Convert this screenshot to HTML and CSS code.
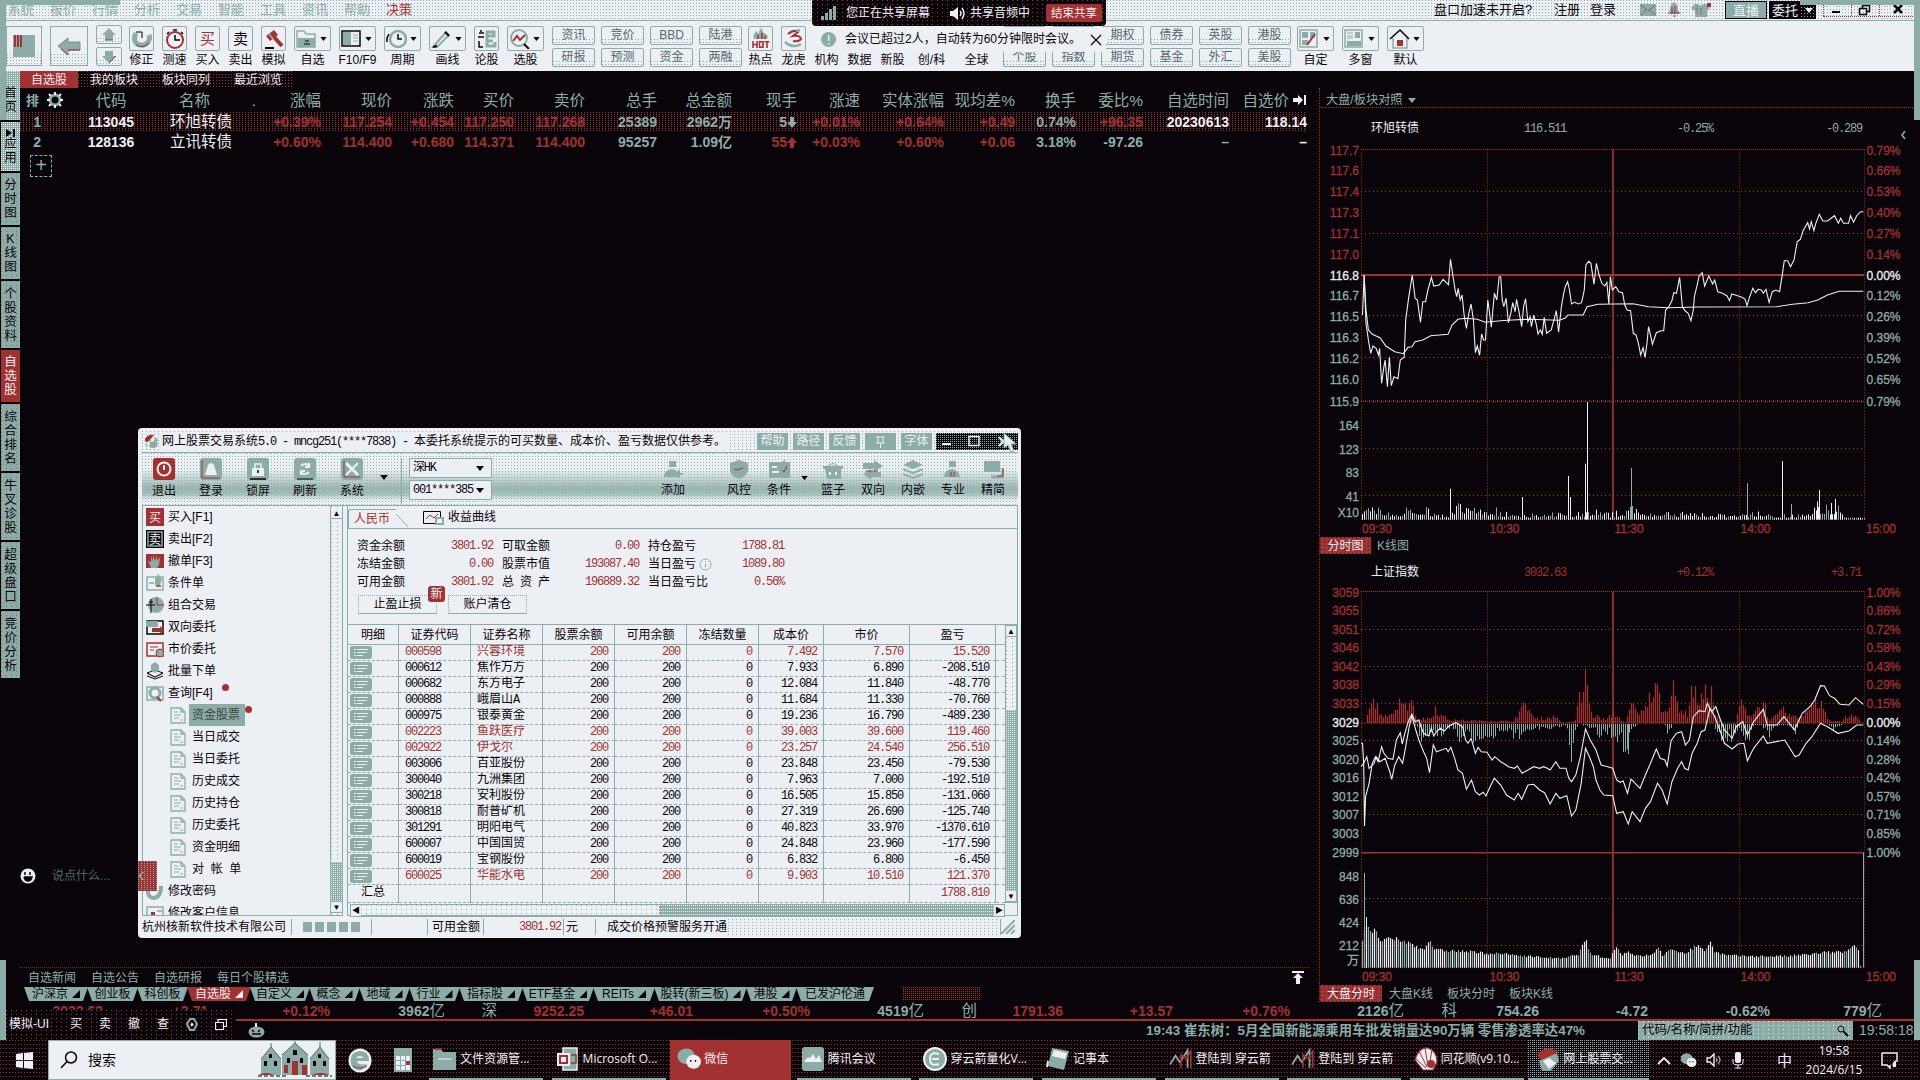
FILE: index.html
```html
<!DOCTYPE html>
<html lang="zh-CN">
<head>
<meta charset="utf-8">
<title>同花顺</title>
<link rel="stylesheet" href="styles.css">
</head>
<body>
<svg class="defs" aria-hidden="true">
  <symbol id="i-down" viewBox="0 0 8 5"><path d="M0 0h8L4 5z" fill="currentColor"/></symbol>
  <symbol id="i-doc" viewBox="0 0 16 17"><path d="M1 1h10l4 4v11H1zM11 1v4h4" fill="#ecf0f4" stroke="#8cada7" stroke-width="1.3"/><path d="M4 5h4M4 8h7M4 11h5M10 13h3" stroke="#8cada7"/></symbol>
  <symbol id="i-chart" viewBox="0 0 22 20"><path d="M1 15l5-8 4 6 7-11v16" fill="none" stroke="#8cada7" stroke-width="1.6"/><path d="M11 18V6l5 4 4-8v16" fill="none" stroke="#a23131" stroke-width="1.5"/></symbol>
  <symbol id="i-chat" viewBox="0 0 26 24"><ellipse cx="10" cy="9" rx="9.5" ry="8.5" fill="#8cada7"/><ellipse cx="18" cy="15" rx="8" ry="7.5" fill="#ecf0f4"/><path d="M15 13v2M20 13v2" stroke="#090409" stroke-width="1.5"/></symbol>
</svg>

<div class="app">
  <header class="menubar">
    <nav class="menus"><span>系统</span><span>报价</span><span>行情</span><span>分析</span><span>交易</span><span>智能</span><span>工具</span><span>资讯</span><span>帮助</span><span class="red">决策</span></nav>
    <div class="account">
      <span>盘口加速未开启?</span><span>注册</span><span>登录</span>
      <svg width="17" height="14"><path d="M0 1h16v12H0z" fill="#8cada7"/><path d="M1 2l7 6 7-6M1 12l5-5M15 12l-5-5" fill="none" stroke="#a23131" stroke-dasharray="2 1"/></svg>
      <svg width="14" height="16"><path d="M7 0q4 2 4 8l3 4H0l3-4q0-6 4-8z" fill="#8cada7"/><path d="M5 5v6M8 4v7M3 11h9M6 14h3" stroke="#a23131"/></svg>
      <svg width="21" height="16"><path d="M4 2h3q3 3 5 0h3l4 4-3 3v6H4V9L0 6z" fill="#8cada7"/><path d="M16 1h4v4h-4z" fill="#a23131"/><path d="M6 4v8M10 6v7" stroke="#a23131" stroke-dasharray="1 1"/></svg>
    </div>
    <div class="wbuttons"><b class="live">直播</b><b class="entrust">委托</b><i class="drop"><svg width="8" height="5"><use href="#i-down"/></svg></i></div>
    <div class="wctl">
      <svg width="28" height="12"><path d="M8 7h8v2H8z"/></svg>
      <svg width="28" height="12"><path d="M7.500 4.500h7v6h-7zM10.500 4V1.500h7v6H15" fill="none" stroke="#090409" stroke-width="1.500"/></svg>
      <svg width="34" height="12"><path d="M14 1l8 8M22 1l-8 8" stroke="#090409" stroke-width="2.500"/></svg>
    </div>
  </header>

  <div class="toolbar" id="toolbar"></div>

  <div class="work">
    <aside class="side">
      <span class="s1 home">首页</span><span class="s1 apps"><svg width="10" height="8"><path d="M0 0l6 4-6 4zM7 0h2v8H7z"/></svg>应用</span><span class="s2">分时图</span><span class="s2">K线图</span><span class="s3">个股资料</span><span class="s2 on">自选股</span><span class="s3">综合排名</span><span class="s3">牛叉诊股</span><span class="s3">超级盘口</span><span class="s3">竞价分析</span>
    </aside>

    <main class="market">
      <div class="tabs"><span class="on">自选股</span><span>我的板块</span><span>板块同列</span><span>最近浏览</span></div>
      <div id="quotes"></div>
      <div class="addrow"><span>+</span></div>
      <div class="grow">
        <div class="danmu"><svg width="16" height="16"><circle cx="8" cy="8" r="7.500" fill="#ecf0f4"/><path d="M5 4v3M10 4v3M4 9h8q-1 4-4 4t-4-4" stroke="#090409" stroke-width="1.500"/></svg><span>说点什么...</span></div>
      </div>
      <div class="news"><span>自选新闻</span><span>自选公告</span><span>自选研报</span><span>每日个股精选</span><svg width="12" height="13"><path d="M0 0h12v2H0zM6 2l5 5H8v6H4V7H1z" fill="#ecf0f4"/></svg></div>
      <div class="sectors" id="sectors"></div>
    </main>

    <section class="panel">
      <h2>大盘/板块对照 <svg width="8" height="5"><use href="#i-down"/></svg></h2>
      <svg class="chart" id="chart1" width="594" height="427" viewBox="10 0 594 427"></svg>
      <div class="ctabs"><span class="on">分时图</span><span>K线图</span></div>
      <svg class="chart" id="chart2" width="594" height="431" viewBox="10 4 594 431"></svg>
      <div class="ctabs wide"><span class="on">大盘分时</span><span>大盘K线</span><span>板块分时</span><span>板块K线</span></div>
    </section>
  </div>

  <div class="indices" id="indices"></div>
  <div class="ticker">
    <svg class="pumpkin" width="17" height="15"><ellipse cx="8.500" cy="9" rx="8" ry="5.500" fill="#8cada7"/><path d="M8 0v4" stroke="#ecf0f4" stroke-width="2"/><path d="M4 7l2 2M12 7l-2 2M4 11h9" stroke="#090409" stroke-width="1.500"/></svg>
    <p>19:43 崔东树：5月全国新能源乘用车批发销量达90万辆 零售渗透率达47%</p>
    <label>代码/名称/简拼/功能<svg width="12" height="12"><circle cx="4" cy="4" r="3" fill="none" stroke="#090409"/><path d="M6 6l5 5" stroke="#090409" stroke-width="2"/></svg></label>
    <time>19:58:18</time>
  </div>

  <footer class="taskbar">
    <div class="start"><svg width="17" height="17"><path d="M0 2l7-1v7H0zM8 1l9-1v8H8zM0 9h7v7l-7-1zM8 9h9v8l-9-1z" fill="#ecf0f4"/></svg></div>
    <div class="search">
      <svg width="18" height="18"><circle cx="11" cy="6.500" r="5.500" fill="none" stroke="#090409" stroke-width="1.500"/><path d="M7 10.500L1 17" stroke="#090409" stroke-width="1.500"/></svg>
      <span>搜索</span>
      <svg class="castle" width="74" height="38" viewBox="0 0 74 38"><path d="M3 34V18L13 6l10 12v16zM24 34V14L37 2l13 12v20zM52 34V18L62 6l9 12v16z" fill="#8cada7"/><path d="M3 18L13 6l10 12M24 14L37 2l13 12M52 18L62 6l9 12M13 6V2M37 2V-3M62 6V1" fill="none" stroke="#55696a"/><path d="M6 20h3v5H6zM16 20h3v5h-3zM11 13h3v4h-3zM29 17h3v5h-3zM42 17h3v5h-3zM35 9h4v5h-4zM55 20h3v5h-3zM65 20h3v5h-3zM60 13h3v4h-3z" fill="#090409"/><path d="M34 20h6v14h-6zM44 24h5v10h-5zM26 24h4v8h-4z" fill="#a23131"/><path d="M0 34q8-4 16 0zM54 34q8-4 18 0z" fill="#a23131"/><path d="M30 38q7-8 14 0z" fill="#ecf0f4"/><path d="M0 35h28M48 35h26" stroke="#090409" stroke-dasharray="4 2"/></svg>
    </div>
    <div class="pin"><svg width="24" height="25"><ellipse cx="12" cy="12.500" rx="11.500" ry="12" fill="#ecf0f4"/><path d="M3 16Q1 4 12 3q9 0 9 10H9q1 5 10 3-3 7-9 6-6-1-7-6z" fill="#8cada7"/><path d="M8 10q4-4 8 0z" fill="#ecf0f4"/><path d="M5 18q7 4 14 0" stroke="#a23131" fill="none"/></svg></div>
    <div class="pin calc"><svg width="18" height="24"><path d="M0 0h18v24H0z" fill="#8cada7"/><path d="M2 8h4v4H2zM7 8h4v4H7zM2 13h4v4H2zM7 13h4v4H7zM2 18h4v4H2zM7 18h4v4H7zM12 8h4v14h-4z" fill="#ecf0f4"/><path d="M12 13h4v4h-4z" fill="#a23131"/></svg></div>
    <div class="tasks" id="tasks"></div>
    <div class="tray">
      <svg width="14" height="9"><path d="M1 8l6-6 6 6" fill="none" stroke="#ecf0f4" stroke-width="1.800"/></svg>
      <svg width="17" height="15" viewBox="0 0 26 24"><use href="#i-chat"/></svg>
      <svg width="17" height="14"><path d="M1 5h3l4-4v12L4 9H1z" fill="none" stroke="#ecf0f4" stroke-width="1.400"/><path d="M10 5q2 2 0 4M12 3q4 4 0 8" fill="none" stroke="#8cada7" stroke-width="1.300"/></svg>
      <svg width="12" height="17"><rect x="3" y="0" width="6" height="11" rx="2" fill="#ecf0f4"/><path d="M1 7v4q0 2 5 2t5-2V7M6 13v3M3 16h6" fill="none" stroke="#ecf0f4"/></svg>
      <span class="ime">中</span>
      <div class="clock"><span>19:58</span><span>2024/6/15</span></div>
      <svg width="18" height="17"><path d="M1 1h15v9M1 1v12h5l3 3v-3" fill="none" stroke="#ecf0f4" stroke-width="1.500"/><path d="M15 8q-5 3-3 7h3z" fill="#ecf0f4"/></svg>
    </div>
  </footer>
</div>

<i class="frame f1"></i><i class="frame f2"></i><i class="frame f3"></i><i class="frame f4"></i><i class="frame f5"></i><i class="frame f6"></i>

<div class="share">
  <svg width="15" height="16"><path d="M0 11h3v4H0zM4 8h3v7H4zM8 4h3v11H8zM12 1h3v14h-3z" fill="#8cada7"/></svg>
  <span>您正在共享屏幕</span>
  <svg class="spk" width="15" height="13"><path d="M0 4h3l5-4v13L3 9H0z" fill="#ecf0f4"/><path d="M10 4q2 2 0 5M12 1q4 5 0 11" fill="none" stroke="#ecf0f4" stroke-width="1.500"/></svg>
  <span>共享音频中</span><b>结束共享</b>
</div>
<div class="notice">
  <svg width="15" height="15"><circle cx="7.500" cy="7.500" r="7.500" fill="#8cada7"/><path d="M7 3h1.500v6H7zM7 11h1.500v1.500H7z" fill="#ecf0f4"/></svg>
  <span>会议已超过2人，自动转为60分钟限时会议。</span>
  <svg width="12" height="12"><path d="M1 1l10 10M11 1L1 11" stroke="#090409" stroke-width="1.300"/></svg>
</div>

<div class="quickbar"><span>模拟-UI</span><span>买</span><span>卖</span><span>撤</span><span>查</span><svg width="12" height="13"><path d="M4 1h4l3 5-3 6H4L1 6z" fill="none" stroke="#8cada7" stroke-width="2"/><circle cx="6" cy="6.500" r="1.500" fill="#ecf0f4"/></svg><svg width="12" height="12"><path d="M.5 3.500h8v7h-8zM3 3V.5h8.500v7H9" fill="none" stroke="#ecf0f4" stroke-width="1.200"/></svg></div>

<div class="trade">
  <div class="t-title">
    <svg width="15" height="15"><path d="M1 5q3-5 9-4L5 7q-2 2-4 0z" fill="#a23131"/><path d="M6 8h7v4q-3 3-7 1zM11 4l3 2-3 2zM1 10l3 2" fill="#8cada7" stroke="#8cada7"/></svg>
    <p>网上股票交易系统<i>5.0 - mncg251(****7838) - </i>本委托系统提示的可买数量、成本价、盈亏数据仅供参考。</p>
    <div class="t-btns"><b>帮助</b><b>路径</b><b>反馈</b><b><svg width="9" height="12"><path d="M0 1h9M2 1v6M7 1v6M0 7h9M4.500 7v5" stroke="#ecf0f4" fill="none"/></svg></b><b>字体</b></div>
    <div class="t-win"><svg width="82" height="17"><path d="M6 10h9v2H6z" fill="#ecf0f4"/><path d="M33 3.500h10v9H33z" fill="none" stroke="#ecf0f4" stroke-width="1.500"/><path d="M63 4l8 9M71 4l-8 9" stroke="#ecf0f4" stroke-width="2"/></svg></div>
  </div>
  <div class="t-bar">
    <div class="t-left" id="tleft"></div>
    <svg class="t-arrow" width="10" height="5" viewBox="0 0 8 5"><use href="#i-down"/></svg>
    <div class="t-sel"><span>深HK<svg width="8" height="5"><use href="#i-down"/></svg></span><span>001****385<svg width="8" height="5"><use href="#i-down"/></svg></span></div>
    <div class="t-right" id="tright"></div>
  </div>
  <div class="t-body">
    <div class="tree"><div class="t-list" id="tree"></div><div class="vbar"><i>▲</i><em></em><b></b><i>▼</i></div></div>
    <div class="t-main">
      <div class="t-tabs"><span class="cny">人民币</span><svg class="slope" width="12" height="20"><path d="M0 7l12 13" stroke="#8cada7" fill="none"/></svg><svg width="21" height="16"><path d="M12 14.500H.5V2.500h17V8" fill="none" stroke="#090409"/><path d="M3 10l4-4 4 3 4-4" fill="none" stroke="#a23131"/><path d="M13 9h7v6h-7z" fill="none" stroke="#8cada7" stroke-width="2"/></svg><span>收益曲线</span></div>
      <div class="sum">
        <span>资金余额</span><b>3801.92</b><span>可取金额</span><b>0.00</b><span>持仓盈亏</span><b>1788.81</b>
        <span>冻结金额</span><b>0.00</b><span>股票市值</span><b>193087.40</b><span>当日盈亏<svg width="13" height="13"><circle cx="6.500" cy="6.500" r="5.500" fill="none" stroke="#8cada7"/><path d="M6.500 5.500v4M6.500 3v1" stroke="#8cada7"/></svg></span><b>1089.80</b>
        <span>可用金额</span><b>3801.92</b><span class="spread">总资产</span><b>196889.32</b><span>当日盈亏比</span><b>0.56%</b>
      </div>
      <div class="acts"><button>止盈止损<em>新</em></button><button>账户清仓</button></div>
      <div class="t-grid"><div class="holdings" id="holdings"></div><div class="vbar v2"><i>▲</i><em></em><b></b><i>▼</i></div></div>
      <div class="hbar"><i>◀</i><em></em><b></b><i>▶</i></div>
    </div>
  </div>
  <div class="t-status"><span>杭州核新软件技术有限公司</span><span class="blocks"><i></i><i></i><i></i><i></i><i></i></span><span></span><span>可用金额</span><span class="amt">3801.92</span><span>元</span><span class="svc">成交价格预警服务开通</span><svg width="14" height="14"><path d="M0 14L14 0M5 14l9-9M10 14l4-4" stroke="#8cada7" stroke-width="2"/></svg></div>
  <div class="handle">‹</div>
</div>
<svg class="cursor" width="14" height="22"><path d="M1 0v15l4-3 3 7 3-1-3-7h5z" fill="#ecf0f4" stroke="#8cada7"/></svg>

<script src="script.js"></script>
</body>
</html>
```
FILE: styles.css
```css
:root {
  --ink: #090409;
  --paper: #ecf0f4;
  --teal: #8cada7;
  --red: #a23131;
  --cjk: "Liberation Sans", "Noto Sans CJK SC", sans-serif;
}
* { box-sizing: border-box; }
body { margin: 0; width: 1920px; height: 1080px; overflow: hidden; background: var(--ink); color: var(--paper); font: 12px/1.2 var(--cjk); white-space: nowrap; }
svg { display: block; flex: none; }
i, em { font-style: normal; }
.defs { position: absolute; width: 0; height: 0; }
.app { display: flex; flex-direction: column; width: 1920px; height: 1080px; }
.red { color: var(--red); }

/* menu bar */
.menubar { height: 21px; display: flex; background: conic-gradient(at 1px 1px, transparent 75%, var(--teal) 0) 0 0/3px 3px var(--paper); border-bottom: 1px solid var(--teal); color: var(--ink); font-size: 13px; line-height: 20px; }
.menus { display: flex; gap: 16px; padding-left: 8px; width: 1434px; color: var(--teal); }
.menus span { width: 26px; }
.menus .red { color: var(--red); }
.account { display: flex; align-items: center; width: 291px; }
.account span:nth-child(1) { width: 120px; }
.account span:nth-child(2) { width: 36px; }
.account span:nth-child(3) { width: 50px; }
.account svg { margin-right: 10px; }
.wbuttons { display: flex; width: 98px; height: 18px; margin-top: 1px; line-height: 17px; text-align: center; }
.wbuttons b { font-weight: 400; color: var(--paper); border: 1px solid var(--ink); }
.live { width: 42px; background: var(--teal); }
.entrust { width: 32px; margin-left: 2px; background: var(--ink); }
.drop { width: 15px; padding: 7px 4px; background: conic-gradient(at 1px 1px, transparent 75%, var(--teal) 0) 0 0/3px 3px var(--ink); color: var(--paper); }
.wctl { display: flex; align-items: flex-end; height: 17px; border-bottom: 1px dotted var(--red); }
.wctl svg { border-left: 1px dotted var(--red); margin-top: 5px; }

/* toolbar */
.toolbar { height: 50px; display: flex; gap: 8px; padding: 5px 0 0 6px; background: var(--paper); color: var(--ink); }
.tool { width: 25px; display: flex; flex-direction: column; align-items: center; line-height: 14px; }
.tool.w { width: 37px; }
.tool .ic { width: 100%; height: 25px; border: 1px solid var(--teal); border-radius: 2px; display: flex; align-items: center; justify-content: center; margin-bottom: 2px; }
.tool.w .ic { justify-content: space-between; padding: 0 3px 0 1px; }
.tool.plain .ic { border-color: transparent; }
.big { width: 38px; height: 40px; border: 1px solid var(--teal); display: flex; align-items: center; justify-content: center; background: linear-gradient(var(--paper) 70%, transparent 70%), conic-gradient(at 1px 1px, transparent 75%, var(--teal) 0) 0 0/3px 3px; }
.stack { display: flex; flex-direction: column; gap: 3px; margin-top: -1px; }
.stack span { width: 43px; height: 19px; border: 1px solid var(--teal); border-radius: 2px; display: flex; align-items: center; justify-content: center; color: #55696a; background: linear-gradient(var(--paper) 60%, transparent 60%), conic-gradient(at 1px 1px, transparent 75%, var(--teal) 0) 0 0/3px 3px; }
.stack.s { margin: 0 -2px 0 0; }
.stack.nar { margin-right: -1px; }
.stack.nar span { width: 26px; background-color: var(--paper); }

/* side tabs */
.work { display: flex; height: 931px; }
.side { width: 20px; display: flex; flex-direction: column; gap: 2px; padding-left: 1px; color: var(--ink); font-size: 12.5px; line-height: 14px; }
.side span { display: flex; flex-direction: column; align-items: center; justify-content: center; white-space: normal; padding: 0 3px; text-align: center; word-break: break-all; background: conic-gradient(at 1px 1px, transparent 75%, rgba(162,49,49,.6) 0) 0 0/5px 4px var(--teal); }
.side .s1 { height: 49px; background: conic-gradient(at 1px 1px, transparent 75%, var(--paper) 0) 0 0/2px 2px var(--teal); }
.side .home { padding-top: 8px; }
.side .s2 { height: 52px; }
.side .s3 { height: 67px; }
.side .on { background: var(--red); color: var(--paper); }

/* watch list */
.market { width: 1299px; display: flex; flex-direction: column; }
.tabs { display: flex; height: 17px; line-height: 18px; text-align: center; }
.tabs span { width: 72px; background: conic-gradient(at 1px 1px, transparent 75%, var(--red) 0) 0 0/3px 3px; }
.tabs .on { width: 58px; background: var(--red); }
.qrow { display: grid; grid-template-columns: 58px 66px 66px 46px 65px 71px 62px 60px 71px 72px 75px 65px 63px 84px 71px 61px 67px 86px 78px; height: 20px; align-items: center; text-align: right; font: bold 14px/20px var(--cjk); color: var(--teal); }
.qrow.head { height: 24px; font-weight: 400; font-size: 15.500px; line-height: 23px; }
.qrow.head span:last-child { display: flex; justify-content: flex-end; align-items: center; gap: 4px; padding-right: 1px; }
.qrow.sel { width: 1286px; background: conic-gradient(at 1px 1px, transparent 75%, var(--red) 0) 0 0/3px 2px; }
.qrow span:nth-child(1) { padding-right: 37px; }
.qrow.head span:nth-child(1) { display: flex; gap: 8px; padding: 0 0 0 6px; font-size: 13px; align-items: center; font-weight: 700; }
.qrow span:nth-child(2) { text-align: center; }
.qrow .name { font-weight: 400; font-size: 15.500px; color: var(--paper); white-space: nowrap; padding-right: 0; width: 88px; text-align: right; }
.qrow.head span:nth-child(3) { padding-right: 0; }
.qrow .up { color: var(--red); }
.qrow .wh { color: var(--paper); }
.addrow { padding: 3px 0 0 10px; }
.addrow span { display: block; width: 22px; height: 22px; border: 1px dashed var(--teal); color: var(--teal); text-align: center; font: 20px/19px var(--cjk); }
.grow { flex: 1; display: flex; flex-direction: column; justify-content: flex-end; }
.danmu { display: flex; align-items: center; gap: 16px; height: 16px; margin-bottom: 83px; color: #55696a; }
.news { display: flex; gap: 15px; height: 20px; line-height: 20px; padding-left: 8px; color: var(--teal); border-top: 1px dotted rgba(162,49,49,.7); margin-right: 10px; }
.news svg { margin: 3px 5px 0 auto; }
.sectors { display: flex; height: 15px; padding-left: 4px; color: var(--ink); }
.sectors span { height: 14px; background: var(--teal); clip-path: polygon(0 0, 100% 0, calc(100% - 5px) 100%, 5px 100%); display: flex; align-items: center; justify-content: center; gap: 4px; font-size: 12px; line-height: 14px; margin-right: -1px; }
.sectors span.on { background: var(--red); color: var(--paper); }
.sectors i { width: 8px; height: 8px; background: currentColor; clip-path: polygon(100% 0, 100% 100%, 0 100%); }
.sectors .hatch { margin-left: 30px; width: 78px; height: 14px; background: conic-gradient(at 1px 1px, transparent 75%, var(--red) 0) 0 0/2px 2px; }

/* right charts */
.panel { width: 601px; border-left: 1px dotted var(--red); margin-top: 17px; display: flex; flex-direction: column; }
.panel h2 { margin: 0; height: 22px; display: flex; align-items: center; gap: 5px; padding: 2px 0 0 6px; font: 12.200px/19px var(--cjk); color: var(--teal); background: linear-gradient(90deg, var(--red) 1px, transparent 1px) 102px 19px/2px 1px repeat-x; }
.chart text { font: 12px "Liberation Sans", "Noto Sans CJK SC", sans-serif; }
.chart .t { font-size: 12px; fill: var(--paper); }
.chart .v { font-family: "Liberation Mono", monospace; letter-spacing: -1.2px; }
.ctabs { height: 17px; display: flex; gap: 6px; line-height: 18px; color: var(--teal); }
.ctabs .on { width: 51px; text-align: center; background: conic-gradient(at 1px 1px, transparent 75%, var(--ink) 0) 0 0/4px 4px var(--red); color: var(--paper); }
.ctabs.wide { gap: 14px; }
.ctabs.wide .on { width: 62px; margin-right: -7px; }

/* index strip and ticker */
.indices { height: 19px; display: grid; grid-template-columns: 103px 105px 122px 115px 52px 87px 109px 117px 114px 53px 86px 110px 117px 114px 53px 82px 109px 122px 112px; font: bold 14px/18px var(--cjk); color: var(--teal); text-align: right; border-bottom: 2px solid var(--red); }
.indices .up { color: var(--red); }
.indices .cn { font-weight: 400; font-size: 15.500px; }
.indices small { font: 15.500px/1 var(--cjk); }
.ticker { height: 19px; display: flex; align-items: center; }
.pumpkin { margin-left: 248px; }
.ticker p { margin: 0 0 0 881px; width: 492px; font: bold 13.400px/18px "Liberation Sans", "Noto Sans CJK SC", sans-serif; color: var(--teal); }
.ticker label { width: 215px; height: 19px; background: conic-gradient(at 1px 1px, transparent 75%, var(--paper) 0) 0 0/5px 4px var(--teal); color: var(--ink); line-height: 19px; padding: 0 4px; display: flex; justify-content: space-between; align-items: center; font-size: 12.500px; }
.ticker time { margin-left: 6px; font-size: 14px; color: var(--teal); }

/* taskbar */
.taskbar { height: 40px; display: flex; align-items: center; background: conic-gradient(at 1px 1px, transparent 75%, var(--red) 0) 0 0/3px 4px var(--ink); font-family: "Open Sans", "Noto Sans CJK SC", sans-serif; }
.start { width: 48px; padding-left: 16px; }
.search { width: 288px; height: 40px; background: var(--paper); border: 1px solid var(--teal); display: flex; align-items: center; gap: 10px; padding: 0 3px 0 11px; color: var(--ink); font-size: 14px; }
.castle { margin-left: auto; }
.pin { width: 46px; padding-left: 12px; }
.calc { width: 43px; }
.tasks { display: flex; gap: 1.600px; width: 1232px; }
.task { width: 121px; height: 40px; flex: none; display: flex; align-items: center; gap: 3px; padding: 0 4px 2px 8px; background: linear-gradient(var(--teal), var(--teal)) 4px 100%/114px 2px no-repeat; }
.task svg { width: 24px; height: 24px; }
.task.hot { background: var(--red); padding-left: 7px; }
.task.on { background: linear-gradient(var(--teal), var(--teal)) 0 100%/121px 2px no-repeat, conic-gradient(at 1px 1px, transparent 75%, var(--teal) 0) 0 0/2px 2px; }
.tray { display: flex; align-items: center; gap: 9px; }
.ime { font-size: 15px; margin: 0 2px 0 24px; }
.clock { display: flex; flex-direction: column; align-items: center; width: 68px; gap: 4px; line-height: 15px; margin: 0 4px 0 -3px; }

/* teal edge of the shared screen */
.frame { position: absolute; background: var(--teal); }
.f1 { left: 0; top: 0; width: 120px; height: 5px; }
.f2 { left: 0; top: 0; width: 6px; height: 120px; }
.f3 { right: 0; top: 0; width: 120px; height: 5px; }
.f4 { right: 0; top: 0; width: 6px; height: 120px; }
.f5 { left: 0; top: 960px; width: 6px; height: 80px; }
.f6 { right: 0; top: 960px; width: 6px; height: 80px; }

/* meeting overlay */
.share { position: absolute; left: 812px; top: 0; width: 294px; height: 26px; display: flex; align-items: center; padding-left: 9px; border-radius: 0 0 4px 4px; background: conic-gradient(at 1px 1px, transparent 75%, var(--red) 0) 0 0/5px 4px var(--ink); }
.share span { margin-left: 10px; width: 85px; }
.share .spk { margin-left: 19px; }
.share .spk + span { margin-left: 5px; width: 62px; }
.share b { margin-left: 14px; width: 56px; height: 18px; line-height: 18px; background: var(--red); text-align: center; font-weight: 400; font-size: 11.500px; border-radius: 2px; }
.notice { position: absolute; left: 813px; top: 27px; width: 293px; height: 25px; background: var(--paper); color: var(--ink); display: flex; align-items: center; padding: 0 9px 0 8px; gap: 9px; font-size: 12px; }
.notice span { width: 238px; }
.quickbar { position: absolute; left: 6px; top: 1010px; width: 230px; height: 29px; display: flex; align-items: center; gap: 17px; padding-left: 3px; background: conic-gradient(at 1px 1px, transparent 75%, var(--red) 0) 0 0/5px 4px var(--ink); }
.quickbar span:first-child { width: 44px; }

/* trading window */
.trade { position: absolute; left: 138px; top: 428px; width: 883px; height: 510px; background: var(--paper); color: var(--ink); border-radius: 4px; padding: 3px 3px 0 4px; display: flex; flex-direction: column; }
.t-title { height: 22px; display: flex; align-items: center; border-bottom: 1px solid var(--teal); background: conic-gradient(at 1px 1px, transparent 75%, var(--teal) 0) 0 0/4px 3px; padding-left: 2px; }
.t-title p { margin: 0 0 0 3px; width: 595px; background: linear-gradient(90deg, var(--paper) 566px, transparent 566px); line-height: 18px; }
.t-title p i { font-family: "Liberation Mono", monospace; letter-spacing: -1.2px; }
.t-btns { display: flex; gap: 5px; width: 179px; }
.t-btns b { width: 31px; height: 17px; line-height: 17px; background: var(--teal); color: var(--paper); font-weight: 400; display: flex; align-items: center; justify-content: center; }
.t-win { height: 17px; background: conic-gradient(at 1px 1px, transparent 75%, var(--teal) 0) 0 0/2px 2px var(--ink); }
.t-bar { height: 53px; display: flex; padding: 5px 0 0 0; border-bottom: 1px solid var(--teal); background: conic-gradient(at 1px 1px, transparent 75%, rgba(140,173,167,.9) 0) 0 0/3px 3px, linear-gradient(var(--paper) 30%, rgba(140,173,167,.85) 68%, rgba(140,173,167,.75) 78%, var(--paper) 92%); }
.t-left { display: flex; padding-left: 10px; gap: 23px; }
.t-left span, .t-right span { width: 24px; display: flex; flex-direction: column; align-items: center; gap: 3px; line-height: 16px; }
.t-arrow { margin: 17px 12px 0 15px; }
.t-sel { border-left: 1px solid var(--teal); padding-left: 7px; height: 46px; display: flex; flex-direction: column; gap: 2px; font-family: "Liberation Mono", "Noto Sans CJK SC", monospace; letter-spacing: -1.2px; }
.t-sel span { width: 83px; height: 20px; border: 1px solid var(--teal); background: var(--paper); display: flex; align-items: center; justify-content: space-between; padding: 0 7px 0 3px; }
.t-right { display: flex; margin-left: 169px; gap: 16px; padding-top: 2px; }
.t-right span { gap: 2px; }
.t-right svg { height: 20px; }
.t-right .more { width: 9px; padding-top: 8px; }
.t-body { display: flex; gap: 4px; height: 410px; }
.tree { width: 201px; border: 1px solid var(--teal); border-top: 0; display: flex; overflow: hidden; }
.t-list { flex: 1; padding: 0 0 0 3px; }
.t-list div { height: 22px; display: flex; align-items: center; gap: 4px; }
.t-list div.sub { padding-left: 24px; gap: 3px; }
.t-list .sub span { padding: 0 3px; }
.t-list .cur span { background: var(--teal); height: 22px; width: 56px; line-height: 22px; color: #3a4546; }
.t-list .dot::after { content: ""; width: 7px; height: 7px; border-radius: 4px; background: var(--red); margin: -12px 0 0 5px; }
.t-list .sub.dot::after { margin-left: -3px; }
.vbar { width: 12px; display: flex; flex-direction: column; border-left: 1px solid var(--teal); padding: 2px 0; background: conic-gradient(at 1px 1px, transparent 75%, var(--teal) 0) 0 0/6px 4px; }
.vbar i { font-size: 8px; height: 11px; line-height: 11px; text-align: center; background: var(--paper); border-bottom: 1px solid var(--teal); }
.vbar em { flex: 1; }
.vbar b { height: 40px; background: conic-gradient(at 1px 1px, transparent 75%, var(--paper) 0) 0 0/2px 2px var(--teal); }
.v2 { border: 1px solid var(--teal); padding: 0; height: 278px; }
.v2 em { flex: none; height: 73px; }
.v2 b { flex: 1; }
.t-main { width: 671px; border: 1px solid var(--teal); border-top: 0; }
.t-tabs { display: flex; height: 23px; align-items: center; border-bottom: 1px solid var(--teal); }
.cny { width: 48px; padding-left: 5px; color: var(--red); border: solid var(--teal); border-width: 1px 0 0 1px; border-radius: 3px 0 0 0; height: 19px; line-height: 18px; margin-top: 3px; }
.slope + svg { margin: 0 4px 0 15px; }
.sum { display: grid; grid-template-columns: 56px 80px 66px 80px 75px 70px; grid-auto-rows: 18px; padding: 8px 0 0 9px; line-height: 18px; }
.sum span { display: flex; gap: 3px; align-items: center; padding-left: 9px; }
.sum > :nth-child(6n+1) { padding-left: 0; }
.sum b { font: 12px/18px "Liberation Mono", monospace; letter-spacing: -1.2px; text-align: right; color: var(--red); }
.sum .spread { letter-spacing: 6px; }
.acts { display: flex; gap: 11px; padding: 4px 0 0 10px; height: 33px; }
.acts button { width: 79px; height: 19px; padding: 0; border: 1px dotted var(--teal); border-bottom: 1px solid var(--teal); background: var(--paper); color: var(--ink); font: 12px/17px var(--cjk); position: relative; }
.acts em { position: absolute; right: -9px; top: -10px; width: 17px; height: 16px; line-height: 16px; border-radius: 3px; background: var(--red); color: var(--paper); }
.t-grid { display: flex; height: 279px; border-top: 1px solid var(--teal); }
.holdings { width: 657px; }
.hrow { display: grid; grid-template-columns: 51px 72px 72px 72px 72px 72px 65px 86px 86px 9px; height: 16px; font: 12px/15px "Liberation Mono", "Noto Sans CJK SC", monospace; letter-spacing: -1.2px; text-align: right; }
.hrow > span { border-right: 1px solid var(--teal); border-bottom: 1px dashed var(--teal); padding-right: 6px; height: 100%; overflow: hidden; }
.hrow > span:last-child { border-right: 0; }
.hrow > span:nth-child(2) { text-align: left; padding-left: 6px; }
.hrow > span:nth-child(3) { text-align: left; padding-left: 6px; letter-spacing: 0; }
.hrow > span:first-child { padding: 1px 0 0 2px; }
.hrow.th { height: 20px; font: 12px/20px var(--cjk); letter-spacing: 0; }
.hrow.th > span { text-align: center !important; padding: 0; border-bottom-style: solid; }
.hrow.total { height: 18px; line-height: 17px; }
.hrow.total > span:first-child { letter-spacing: 0; padding: 0; text-align: center; }
.hrow.r { color: var(--red); }
.hbar { height: 13px; margin: 1px 0 0 2px; width: 655px; display: flex; border: 1px solid var(--teal); background: conic-gradient(at 1px 1px, transparent 75%, var(--teal) 0) 0 0/5px 4px; font-size: 8px; line-height: 11px; }
.hbar i { width: 10px; text-align: center; background: var(--paper); }
.hbar em { width: 298px; }
.hbar b { flex: 1; background: conic-gradient(at 1px 1px, transparent 75%, var(--paper) 0) 0 0/2px 3px var(--teal); }
.t-status { height: 21px; display: flex; align-items: center; }
.t-status span { height: 16px; line-height: 16px; border-right: 1px solid var(--teal); width: 56px; padding-left: 4px; background: var(--paper); }
.t-status span:first-child { width: 150px; padding: 0; }
.t-status .blocks { width: 80px; display: flex; gap: 3px; padding: 3px 0 0 11px; }
.blocks i { width: 9px; height: 10px; background: var(--teal); }
.t-status .amt { width: 80px; text-align: right; padding-right: 2px; color: var(--red); font-family: "Liberation Mono", monospace; letter-spacing: -1.2px; }
.t-status span:nth-child(6) { width: 32px; padding-left: 2px; }
.t-status .svc { width: 405px; padding-left: 11px; background: linear-gradient(90deg, var(--paper) 132px, transparent 132px), conic-gradient(at 1px 1px, transparent 75%, var(--teal) 0) 0 0/4px 3px; }
.handle { position: absolute; left: 0; top: 433px; width: 19px; height: 30px; background: conic-gradient(at 1px 1px, transparent 75%, var(--teal) 0) 0 0/3px 2px var(--red); color: var(--teal); line-height: 26px; font-size: 20px; }
.cursor { position: absolute; left: 1003px; top: 433px; }
```
FILE: script.js
```js
const $ = id => document.getElementById(id);
const T = '#8cada7', R = '#a23131', K = '#090409', W = '#ecf0f4';
const svg = (w, h, body, vb) => `<svg width="${w}" height="${h}" viewBox="${vb || `0 0 ${w} ${h}`}">${body}</svg>`;
const caret = '<svg width="7" height="4" viewBox="0 0 8 5"><use href="#i-down"/></svg>';
const p = (d, fill, stroke, w = 1.5) => `<path d="${d}" fill="${fill || 'none'}" stroke="${stroke || 'none'}" stroke-width="${w}"/>`;

/* main toolbar */
const tool = (label, icon, cls = '') =>
  `<div class="tool ${cls}"><div class="ic">${icon}${cls.includes('w') && icon ? caret : ''}</div>${label}</div>`;
const stack = (a, b) => `<div class="stack s"><span>${a}</span><span>${b}</span></div>`;
const glyph = (c, col) => `<span style="font-size:15px;color:${col}">${c}</span>`;
$('toolbar').innerHTML =
  `<div class="big" style="width:36px">${svg(22, 22, p('M0 0h22v22H0z', T) + p('M2 0v12M5 0v12M8 0v12', '', R, 2))}</div>` +
  `<div class="big">${svg(24, 20, p('M1 10L11 2v4h12v8H11v5z', T, '#78908e', 1) + p('M11 14h12M4 13l7 6', '', R, 1))}</div>` +
  `<div class="stack nar"><span>${svg(14, 13, p('M7 0l7 7h-3v5H3V7H0z', T) + p('M3 12h8', '', R, 1))}</span><span>${svg(14, 13, p('M7 13l7-7h-3V1H3v5H0z', T) + p('M7 13l7-7', '', R, 1))}</span></div>` +
  tool('修正', svg(20, 20, p('M4 4q-3 6 0 10 5 4 10 1 5-4 3-9', '', T, 5) + p('M4 3h6v6', '', K, 1) + p('M4 16q7 4 13-2', '', R, 1))) +
  tool('测速', svg(20, 20, `<circle cx="10" cy="11" r="8" fill="${W}" stroke="${R}" stroke-width="2"/>` + p('M4 3l-2 2M16 3l2 2M8 1h4M10 6v5h5', '', K))) +
  tool('买入', glyph('买', R)) + tool('卖出', glyph('卖', K)) +
  tool('模拟', svg(20, 20, p('M2 7l8-6 4 5-8 6z', R) + p('M10 8l8 9', '', R, 4) + p('M5 5l4 5', '', T, 2) + p('M1 19h9', '', K, 2))) +
  tool('自选', svg(20, 18, p('M1 3V1h7l2 3h9v13H1z', W, T) + p('M2 8h17v9H2z', T) + p('M9 11h4M8 14h6', '', K, 1)), 'w') +
  tool('F10/F9', svg(20, 17, p('M1 1h18v15H1z', W, K) + p('M2 2h8v13H2z', T) + p('M12 5h5M12 8h5M12 11h5', '', T, 1)), 'w') +
  tool('周期', svg(21, 19, `<circle cx="12" cy="10" r="8" fill="${W}" stroke="${T}" stroke-width="2.500"/>` + p('M12 5v5h4M3 5L1 9v4', '', K)), 'w') +
  tool('画线', svg(20, 20, p('M2 18L15 3l3 3L6 18z', W, T, 2) + p('M14 3l4 4M2 18l4-1', '', K, 2)), 'w') +
  tool('论股', svg(20, 20, p('M2 4h5M4 1v2M1 8h6M2 12v6h4', '', K) + p('M10 3h7v4h-7zM10 7v10h8v-4M10 12h6', '', T, 3))) +
  tool('选股', svg(22, 20, `<circle cx="10" cy="9" r="8" fill="${W}" stroke="${T}" stroke-width="2"/>` + p('M4 12l4-5 3 4 5-5', '', R, 2) + p('M15 15l5 5', '', K, 2)), 'w') +
  stack('资讯', '研报') + stack('竞价', '预测') + stack('BBD', '资金') + stack('陆港', '两融') +
  tool('热点', svg(20, 21, p('M3 11q-2-5 3-8 0 3 2 2 0-4 3-5 0 5 4 6 3 2 1 5z', T) + p('M7 11v-4M11 11V5M14 11V8', '', R) + p('M2 13v7M6 13v7M2 16.500h4M8.500 13.700h3.500v5.500H8.500zM13.500 13.700h5M16 14v6', '', R, 1.6))) +
  tool('龙虎', svg(20, 20, p('M4 5q6-5 10-2l-5 4q7-1 8 3-2 3-8 2', '', R, 2) + p('M1 13q8 7 16 2M12 2l4-1', '', T, 2.5))) +
  tool('机构', '', 'plain') + tool('数据', '', 'plain') + tool('新股', '', 'plain') + tool('创/科', '', 'w plain') + tool('全球', '', 'w plain') +
  [['', '个股'], ['', '指数'], ['期权', '期货'], ['债券', '基金'], ['英股', '外汇'], ['港股', '美股']].map(a => stack(...a)).join('') +
  tool('自定', svg(19, 19, p('M1 1h17v17H1z', W, T) + p('M3 3h6v6H3zM11 3h5v6h-5zM3 11h6v5H3z', T) + p('M8 16l8-11', '', R, 2)), 'w') +
  tool('多窗', svg(19, 19, p('M1 1h17v17H1z', W, T) + p('M3 4h6M3 7h6M3 9h6', '', T, 1) + p('M11 3h5v6h-5zM3 12h14v5H3z', T)), 'w') +
  tool('默认', svg(21, 21, p('M4 10v10h14V10', W, T) + p('M1 11L11 2l9 9', '', K, 1.5) + p('M8 12h6v6H8z', R)), 'w');

/* watch list */
const gear = svg(16, 16, `<circle cx="8" cy="8" r="5" fill="none" stroke="${T}" stroke-width="3"/>` + p('M8 0v3M8 13v3M0 8h3M13 8h3M2 2l2 2M12 12l2 2M14 2l-2 2M2 14l2-2', '', W, 2));
const heads = ['代码', '名称', '.', '涨幅', '现价', '涨跌', '买价', '卖价', '总手', '总金额', '现手', '涨速', '实体涨幅', '现均差%', '换手', '委比%', '自选时间', '自选价' + svg(13, 10, p('M0 3h5V0l5 5-5 5V7H0zM11 0h2v10h-2z', W))];
const quotes = [
  ['1', '113045', '环旭转债', '', '+0.39%', '117.254', '+0.454', '117.250', '117.268', '25389', '2962万', '5🡇', '+0.01%', '+0.64%', '+0.49', '0.74%', '+96.35', '20230613', '118.14'],
  ['2', '128136', '立讯转债', '', '+0.60%', '114.400', '+0.680', '114.371', '114.400', '95257', '1.09亿', '55🡅', '+0.03%', '+0.60%', '+0.06', '3.18%', '-97.26', '–', '–']];
const tone = (c, i) => i === 2 ? 'name' : [1, 18].includes(i) || c === '20230613' ? 'wh'
  : c[0] === '+' || [5, 7, 8].includes(i) || c.startsWith('55') ? 'up' : '';
const arrowed = c => c.replace('🡇', svg(10, 11, p('M3 0h4v5h3l-5 6-5-6h3z', T))).replace('🡅', svg(10, 11, p('M3 11h4V6h3L5 0 0 6h3z', R)))
  .replace('<svg', '<svg style="display:inline-block;vertical-align:-1px"');
$('quotes').innerHTML = `<div class="qrow head"><span>排${gear}</span>${heads.map(h => `<span>${h}</span>`).join('')}</div>` +
  quotes.map((r, n) => `<div class="qrow ${n ? '' : 'sel'}">${r.map((c, i) => `<span class="${tone(c, i)}">${arrowed(c)}</span>`).join('')}</div>`).join('');

/* sector tabs: name, width, has marker */
$('sectors').innerHTML = [['沪深京', 64, 1], ['创业板', 51], ['科创板', 51], ['自选股', 64, 1], ['自定义', 60, 1], ['概念', 51, 1], ['地域', 51, 1], ['行业', 51, 1], ['指标股', 64, 1], ['ETF基金', 72, 1], ['REITs', 62, 1], ['股转(新三板)', 93, 1], ['港股', 51, 1], ['已发沪伦通', 78]]
  .map(([t, w, m]) => `<span class="${t === '自选股' ? 'on' : ''}" style="width:${w}px">${t}${m ? '<i></i>' : ''}</span>`).join('') + '<div class="hatch"></div>';

/* index strip */
$('indices').innerHTML = ['3032.63', '+3.71', '+0.12%', '3962亿', '深', '9252.25', '+46.01', '+0.50%', '4519亿', '创', '1791.36', '+13.57', '+0.76%', '2126亿', '科', '754.26', '-4.72', '-0.62%', '779亿']
  .map((c, i) => `<span class="${/^[深创科]$/.test(c) ? 'cn' : /^\+/.test(c) || [0, 5, 10].includes(i) ? 'up' : ''}">${c.replace('亿', '<small>亿</small>')}</span>`).join('');

/* taskbar */
const chartIcon = '<svg viewBox="0 0 22 20"><use href="#i-chart"/></svg>';
$('tasks').innerHTML = [
  ['文件资源管...', svg(24, 24, p('M0 5V2h8l2 3h13v18H0z', T) + p('M2 2h6', '', R, 2) + p('M5 12h14', '', W, 1))],
  ['Microsoft O...', svg(24, 24, p('M7 1h14v22H7z', T, W) + p('M1 6h13v13H1z', W) + p('M4 9h7v7H4z', W, R, 2) + p('M15 8h5v8h-5', '', R))],
  ['微信', '<svg viewBox="0 0 26 24"><use href="#i-chat"/></svg>', 'hot'],
  ['腾讯会议', svg(24, 24, `<rect x="1" width="22" height="24" rx="3" fill="${T}"/>` + p('M3 15q3-6 6-4l3-4 3 5 3-4 3 7z', W))],
  ['穿云箭量化V...', svg(24, 24, `<circle cx="12" cy="12" r="11" fill="${T}" stroke="${W}" stroke-width="2"/>` + p('M16 7q-9-3-9 5t9 5M9 12h7', '', W, 2))],
  ['记事本', svg(24, 24, p('M6 1l17 3-5 19-16-4z', T) + p('M8 3l13 3-2 6-13-3z', W) + p('M2 14l-1 6', '', W, 2))],
  ['登陆到 穿云箭', chartIcon], ['登陆到 穿云箭', chartIcon],
  ['同花顺(v9.10...', svg(24, 24, p('M2 10Q6 0 14 1q9 3 9 14l-4 8H9L1 13z', W, R, 1.2) + p('M5 4l8 16M11 1l3 18M18 3l-3 16M1 11l11 10', '', R, 1) + `<circle cx="17" cy="17" r="4" fill="${R}"/>`)],
  ['网上股票交...', svg(24, 24, p('M1 9Q7-3 22 4l-8 8-8 2z', R) + p('M3 14l18-8 2 8-8 10H6z', T) + p('M7 14l6-3 7 5-7 6z', W)), 'on']]
  .map(([t, i, c]) => `<div class="task ${c || ''}">${i}<span>${t}</span></div>`).join('');

/* trading window toolbar */
const tile = (bg, d) => svg(22, 22, `<rect width="22" height="22" rx="3" fill="${bg}"/>` + d);
$('tleft').innerHTML = [
  ['退出', tile(R, `<circle cx="11" cy="11" r="6.500" fill="none" stroke="${W}" stroke-width="2"/>` + p('M11 7v5', '', W, 2))],
  ['登录', tile(T, p('M5 17l3-10q3-4 6 0l3 10z', W) + p('M2 2v18h18', '', R, 1))],
  ['锁屏', tile(T, p('M5 10h12v8H5z', W) + p('M8 10V6h6v4', '', W) + p('M11 12v3M3 21h16', '', K))],
  ['刷新', tile(T, p('M16 8q-5-4-9 0M15 5v4h-4M6 14q5 4 9 0M7 17v-4h4', '', W, 2) + p('M3 21h16', '', K, 1))],
  ['系统', tile(T, p('M5 5l12 12', '', W, 3) + p('M17 5L5 17', '', W, 2) + p('M3 3v16h16', '', R, 1))]]
  .map(([t, i]) => `<span>${i}${t}</span>`).join('');
const man = p('M6 1h7v6H6zM1 17q0-7 8-8 7 1 8 8z', T);
$('tright').innerHTML = [
  ['添加', man + p('M16 10v8M12 14h8', '', T, 2), 0], ['风控', p('M1 3l9-3 9 3v8q-2 6-9 8-7-2-9-8z', T) + p('M5 9l3 1 6-2', '', R, 1), 26],
  ['条件', p('M0 2h13l2-2 2 2h4v16H0z', T) + p('M3 7h5M3 12h7', '', W, 2) + p('M13 10l2 2 3-6', '', R, 1), 0], ['', '', -7],
  ['篮子', p('M3 8q7-9 14 0', '', T, 1) + p('M0 6h20v3H0zM2 9h16v10H4z', T) + p('M6 12h2v3H6zM12 12h2v3h-2z', W), -4], ['双向', p('M20 6L11 0v3H0v6h11v3zM0 14l8-5v3h10v5H8v3z', T) + p('M3 11h12', '', R, 1), 0],
  ['内嵌', p('M10 0l10 5-10 4L0 5zM0 8l10 4 10-4v2l-10 4L0 10zM0 13l10 4 10-4v2l-10 4L0 15z', T), 0], ['专业', man + p('M8 12v5M11 12v5', '', R, 1), 0],
  ['精简', p('M1 1h16v11H1z', T) + p('M20 8v9H8', '', T, 3) + p('M14 16h6V9', '', R, 1), 0]]
  .map(([t, i, m]) => `<span class="${t ? '' : 'more'}" style="margin-left:${m}px">${t ? svg(21, 20, i) + t : caret}</span>`).join('');

/* function tree */
const card = (d, c = T) => svg(18, 18, p('M1 3h16v13H1z', W, c) + d);
const tree = [
  ['买入[F1]', svg(18, 18, p('M0 0h18v18H0z', R) + `<text x="3" y="14" font-size="12" fill="${W}">买</text>`)],
  ['卖出[F2]', svg(18, 18, p('M0 0h18v18H0z', K) + p('M2 2h14v14H2z', '', T) + `<text x="3" y="14" font-size="12" fill="${W}">卖</text>`)],
  ['撤单[F3]', svg(18, 18, p('M0 2h18v14H0z', R) + p('M5 16L2 9l3 1V4l2 5V3l2 6 2-6v6l3-4-1 8-2 3z', T))],
  ['条件单', card(p('M9 5l3-5 4 5-2 6H9z', T) + p('M3 9h5', '', T) + p('M10 12h5', '', R))],
  ['组合交易', svg(18, 18, `<circle cx="10" cy="9" r="8" fill="${T}"/>` + p('M11 1v8h7', '', R, 1) + p('M0 9h9M3 6h4M5 3v14', '', K, 1))],
  ['双向委托', card(p('M0 3h12v6H0z', T) + p('M6 10h8v-2l4 4-4 4v-2H6z', R), K)],
  ['市价委托', card(p('M4 7h8M4 10h4', '', R, 1) + `<circle cx="14" cy="13" r="4" fill="${T}" stroke="${R}"/>`, R)],
  ['批量下单', svg(18, 18, p('M1 11l8 4 8-4M1 14l8 3 8-3', '', K, 1) + p('M1 11l8-3 8 3-8 4z', W, K, 1) + p('M5 9V3l4-3 4 3v6l-4 2z', T))],
  ['查询[F4]', card(`<circle cx="9" cy="9" r="5" fill="none" stroke="${T}" stroke-width="3"/>` + p('M11 13l4 4', '', R, 2)), 'dot'],
  ['资金股票', 0, 'cur dot'], ['当日成交', 0], ['当日委托', 0], ['历史成交', 0], ['历史持仓', 0], ['历史委托', 0], ['资金明细', 0], ['对&nbsp; 帐&nbsp; 单', 0],
  ['修改密码', svg(18, 18, p('M2 6q-1 10 6 10 7-1 7-12', '', T, 4))], ['修改客户信息', card(p('M5 8h4v6H5z', R) + p('M11 7h5', '', T))]];
$('tree').innerHTML = tree.map(([t, i, c]) =>
  `<div class="${i ? '' : 'sub'} ${c || ''}">${i || '<svg width="16" height="17"><use href="#i-doc"/></svg>'}<span>${t}</span></div>`).join('');

/* holdings: code, name, cost, price, profit */
const list = '<svg width="22" height="13"><rect width="22" height="13" rx="2" fill="#8cada7"/><path d="M4 3.500h2M7 3.500h11M4 6.500h2M7 6.500h10M4 9.500h2M7 9.500h6" stroke="#ecf0f4"/></svg>';
const hold = `000598 兴蓉环境 7.492 7.570 15.520
000612 焦作万方 7.933 6.890 -208.510
000682 东方电子 12.084 11.840 -48.770
000888 峨眉山A 11.684 11.330 -70.760
000975 银泰黄金 19.236 16.790 -489.230
002223 鱼跃医疗 39.003 39.600 119.460
002922 伊戈尔 23.257 24.540 256.510
003006 百亚股份 23.848 23.450 -79.530
300040 九洲集团 7.963 7.000 -192.510
300218 安利股份 16.505 15.850 -131.060
300818 耐普矿机 27.319 26.690 -125.740
301291 明阳电气 40.823 33.970 -1370.610
600007 中国国贸 24.848 23.960 -177.590
600019 宝钢股份 6.832 6.800 -6.450
600025 华能水电 9.903 10.510 121.370`.split('\n').map(l => l.split(' '));
const row = (cells, cls) => `<div class="hrow ${cls}">${cells.map(c => `<span>${c}</span>`).join('')}</div>`;
$('holdings').innerHTML = row(['明细', '证券代码', '证券名称', '股票余额', '可用余额', '冻结数量', '成本价', '市价', '盈亏', ''], 'th') +
  hold.map(([a, b, c, d, e]) => row([list, a, b, '200', '200', '0', c, d, e, ''], e[0] === '-' ? '' : 'r')).join('') +
  row(['汇总', '', '', '', '', '', '', '', '<span class="red">1788.810</span>', ''], 'total');

/* charts; traces use a 2.57 x 3 grid per pixel */
const rnd = (s => () => (s = (s * 16807) % 2147483647) / 2147483647)(7);
const line = (x1, y1, x2, y2, w = 1, dash = '') => `<path d="M${x1} ${y1}L${x2} ${y2}" stroke="${R}" stroke-width="${w}" stroke-dasharray="${dash}"/>`;
const text = (x, y, s, fill, anchor = 'start', cls = '') => `<text x="${x}" y="${y + 4.3}" fill="${fill}" text-anchor="${anchor}" class="${cls}"${cls ? '' : ` stroke="${fill}" stroke-width=".3"`}>${s}</text>`;
const trace = s => `<polyline points="${s.split(' ').map(q => { const [x, y] = q.split(',').map(Number); return (x / 2.57).toFixed(1) + ',' + (y / 3).toFixed(1); }).join(' ')}" fill="none" stroke="${W}" stroke-width="1.1"/>`;
const env = (pts, x) => { for (let i = 1; i < pts.length; i++) if (x <= pts[i][0]) { const [a, b] = [pts[i - 1], pts[i]]; return a[1] + (b[1] - a[1]) * (x - a[0]) / (b[0] - a[0]); } return 0; };
const bar = (zx, y1, y2, c, w = 1) => `<path d="M${Math.round(zx / 2.57) + .5} ${y1.toFixed(1)}V${y2.toFixed(1)}" stroke="${c}" stroke-width="${w}"/>`;
function frame(o) {
  let s = '';
  o.ys.forEach((y, i) => {
    const c = i < o.zero ? R : i === o.zero ? W : T;
    s += text(49, y, o.left[i], c, 'end') + (o.right[i] ? text(556.5, y, o.right[i], c) : '');
    if (i && i % 2 === 0 && i !== o.zero) s += line(51, Math.floor(y - .7) + .5, 554, Math.floor(y - .7) + .5, 1, '1 3');
  });
  [51.5, 177.5, 429.500, 554.500].forEach(x => s += line(x, o.top, x, o.floor, 1, '1 2'));
  s += line(303, o.top, 303, o.floor, 1.7) + line(51, o.top, 554, o.top, 1, '1 1') + line(51, o.mid, 554, o.mid, o.midw, o.midw > 1 ? '' : '1 1') + line(51, o.floor, 554, o.floor, .7, '1 3');
  ['09:30', '10:30', '11:30', '14:00', '15:00'].forEach((t, i) => s += text([52, 179.5, 304.500, 430.500, 556][i], o.floor + 9, t, R));
  s += text(61, o.ty, o.title[0], W, 'start', 't') + text(214, o.ty, o.title[1], o.tc, 'start', 'v') + text(367, o.ty, o.title[2], o.tc, 'start', 'v') + text(o.tx, o.ty, o.title[3], o.tc, 'start', 'v');
  return s;
}
let s1 = frame({ ys: [40.7, 60.7, 81.7, 102.600, 123.700, 144.700, 165.300, 185.600, 206.600, 227.600, 248.600, 269.600, 291.600, 315.600, 339.600, 362.600, 386.600, 402.600], zero: 6,
  left: '117.7 117.6 117.4 117.3 117.1 117.0 116.8 116.7 116.5 116.3 116.2 116.0 115.9 164 123 83 41 X10'.split(' '),
  right: '0.79% 0.66% 0.53% 0.40% 0.27% 0.14% 0.00% 0.12% 0.26% 0.39% 0.52% 0.65% 0.79%'.split(' '),
  top: 39.500, mid: 291.500, midw: 1, floor: 409.500, ty: 18, title: ['环旭转债', '116.511', '-0.25%', '-0.289'], tc: T, tx: 516 });
s1 += line(51, 165, 554, 165, 2);
const spikes = { 361: 93, 544: 68, 662: 131, 667: 68, 708: 168, 713: 353, 826: 155, 1122: 110, 1214: 176, 1235: 47, 1309: 89, 1304: 55, 1348: 62, 1340: 50 };
const e1 = [[130, 70], [150, 65], [180, 45], [235, 30], [248, 60], [300, 45], [350, 16], [376, 60], [450, 50], [500, 35], [600, 18], [640, 36], [700, 30], [740, 50], [770, 20], [820, 55], [850, 52], [880, 30], [1000, 30], [1100, 18], [1140, 36], [1200, 18], [1280, 28], [1300, 65], [1360, 65], [1375, 6], [1425, 6]];
for (let x = 133; x < 1425; x += 5.14) s1 += bar(x, 409.700 - Math.max(2, env(e1, x) * (.25 + .75 * rnd() * rnd()) / 3), 409.700, rnd() > .6 ? T : W);
for (const x in spikes) s1 += bar(+x, 409.700 - spikes[x] / 3, 409.700, [826, 1122, 1235].includes(+x) ? T : W);
s1 += trace('135,615 139,495 144,640 150,690 156,730 162,708 170,715 176,735 179,715 184,820 190,770 193,750 199,830 204,742 209,827 216,800 226,806 232,750 242,742 246,630 254,560 263,495 270,565 276,570 284,637 290,575 297,575 303,540 312,502 318,528 332,525 342,508 356,524 361,448 367,495 373,540 377,560 381,535 386,570 391,555 396,615 402,655 408,610 414,582 420,630 425,728 430,708 436,736 441,672 446,690 451,690 457,570 461,605 466,652 474,550 480,570 486,500 490,500 494,570 498,590 504,565 510,638 516,610 521,578 527,605 531,568 538,610 544,650 549,590 554,566 560,635 566,620 569,650 575,615 581,640 586,672 592,660 597,673 602,622 608,670 620,660 628,625 633,602 639,667 646,590 652,550 656,530 662,515 667,540 672,582 680,577 690,582 698,578 705,540 709,465 716,454 722,460 730,523 736,460 743,495 750,520 758,528 763,517 768,582 772,500 777,540 786,530 794,545 803,548 809,585 815,600 824,602 831,670 838,675 844,700 850,735 856,713 861,742 866,700 870,650 876,680 880,703 890,668 902,662 909,662 914,600 922,590 930,572 935,548 942,550 950,502 957,590 965,604 972,610 979,632 985,600 988,560 995,525 1000,498 1008,488 1014,528 1025,498 1035,522 1040,510 1048,545 1060,550 1072,558 1078,572 1084,552 1095,556 1110,562 1118,567 1123,587 1130,560 1138,535 1145,548 1152,538 1160,540 1165,550 1172,538 1180,577 1188,545 1197,540 1207,545 1213,500 1219,452 1228,452 1235,470 1244,450 1252,395 1260,388 1268,360 1279,338 1284,357 1288,335 1295,362 1300,340 1309,313 1318,333 1330,333 1348,317 1358,340 1364,325 1371,340 1384,340 1389,317 1397,337 1405,317 1415,305 1422,305');
s1 += trace('139,495 144,600 150,660 160,673 180,683 195,708 218,725 240,731 252,712 262,710 270,695 290,690 310,677 355,673 365,645 380,628 400,625 430,628 450,637 490,632 520,630 560,628 640,631 655,625 663,615 702,615 712,590 740,583 830,581 870,590 920,593 1000,591 1200,590 1240,583 1280,578 1305,570 1330,555 1360,544 1422,544');
s1 += `<path d="M595 21l-3 4 3 4" fill="none" stroke="${T}" stroke-width="1.5"/>`;
$('chart1').innerHTML = s1;

let s2 = frame({ ys: [42.7, 60.7, 79.700, 97.700, 116.700, 134.700, 153.700, 172.700, 190.700, 209.700, 227.700, 246.700, 264.700, 283.700, 302.700, 326.700, 349.300, 372.300, 395.700, 411], zero: 7,
  left: '3059 3055 3051 3046 3042 3038 3033 3029 3025 3020 3016 3012 3007 3003 2999 848 636 424 212 万'.split(' '),
  right: '1.00% 0.86% 0.72% 0.58% 0.43% 0.29% 0.15% 0.00% 0.14% 0.28% 0.42% 0.57% 0.71% 0.85% 1.00%'.split(' '),
  top: 41.500, mid: 302.700, midw: 1.6, floor: 417.700, ty: 22, title: ['上证指数', '3032.63', '+0.12%', '+3.71'], tc: R, tx: 521 });
s2 += line(51, 173, 554, 173, 1, '2 1');
const up = [[145, 30], [168, 95], [178, 30], [215, 45], [228, 110], [240, 60], [258, 95], [275, 15], [310, 20], [320, 65], [335, 30], [360, 12], [480, 8], [520, 8], [555, 80], [575, 15], [630, 25], [650, 0], [680, 8], [692, 110], [708, 190], [716, 90], [722, 35], [760, 12], [778, 40], [810, 0], [826, 80], [845, 25], [858, 75], [892, 140], [905, 40], [918, 40], [928, 150], [945, 70], [968, 30], [978, 140], [1000, 90], [1028, 140], [1040, 40], [1055, 0], [1095, 0], [1100, 85], [1130, 30], [1165, 85], [1180, 10], [1215, 50], [1225, 35], [1250, 20], [1300, 85], [1318, 70], [1330, 10], [1365, 5], [1375, 30], [1415, 22]];
const down = [[270, 10], [280, 50], [307, 75], [320, 30], [335, 50], [365, 20], [380, 60], [405, 35], [425, 80], [440, 50], [470, 70], [490, 20], [525, 70], [545, 30], [600, 20], [655, 10], [672, 140], [680, 20], [690, 0], [720, 20], [745, 50], [768, 40], [780, 55], [812, 100], [825, 15], [850, 0], [910, 0], [920, 75], [930, 0], [1035, 0], [1060, 75], [1090, 50], [1100, 10], [1124, 70], [1135, 10], [1160, 10], [1180, 45], [1190, 10], [1235, 5], [1245, 45], [1255, 0], [1330, 0], [1345, 35], [1360, 10], [1370, 0]];
for (let x = 146; x < 1417; x += 5.14) {
  s2 += bar(x, 173 - env(up, x) * (.45 + .55 * rnd()) / 3, 173, R, 1.3);
  const d = env(down, x);
  if (d > 4) s2 += bar(x, 174, 174 + d * (.25 + .75 * rnd()) / 3, T);
}
s2 += bar(708, 119, 173, R) + bar(672, 174, 212, T) + bar(816, 174, 204, T);
const e2 = [[134, 90], [143, 150], [155, 125], [168, 118], [175, 92], [230, 92], [255, 80], [290, 60], [307, 92], [320, 58], [380, 55], [450, 48], [500, 45], [560, 38], [650, 30], [690, 45], [708, 92], [720, 45], [770, 28], [785, 75], [800, 40], [815, 55], [840, 38], [880, 42], [892, 70], [905, 42], [928, 58], [965, 50], [998, 75], [1015, 55], [1027, 85], [1040, 52], [1070, 40], [1150, 38], [1230, 38], [1290, 45], [1320, 50], [1375, 52], [1407, 75], [1413, 6], [1416, 6]];
for (let x = 134; x < 1416; x += 5.14) s2 += bar(x, 417.700 - env(e2, x) * (.82 + .18 * rnd()) / 3, 417.700, rnd() > .7 ? T : W, 1.2);
s2 += bar(140, 323, 417.700, T) + bar(145, 367, 417.700, W) + bar(1422, 303, 417.700, T);
s2 += trace('131,580 135,580 138,640 140,828 143,740 152,700 160,640 168,620 175,635 184,590 190,610 200,625 213,628 222,570 232,548 237,582 245,545 254,510 262,493 270,515 280,510 285,530 292,550 305,558 312,535 318,558 325,545 335,535 345,543 357,528 375,518 385,525 393,532 400,570 406,580 414,565 425,610 432,592 440,605 455,607 468,630 475,620 490,635 500,642 510,650 525,655 533,648 545,670 560,660 575,650 590,655 600,650 610,655 617,660 632,635 642,655 658,655 665,685 672,695 683,675 695,620 703,570 708,537 720,570 735,600 748,645 765,650 778,655 788,690 797,697 805,693 816,730 825,687 848,715 862,675 875,640 890,597 900,625 912,630 918,648 928,572 942,550 955,545 965,585 975,570 985,500 1000,482 1015,485 1021,460 1032,485 1043,470 1055,510 1065,540 1085,565 1095,530 1112,515 1124,555 1140,515 1165,478 1175,525 1200,525 1218,500 1245,540 1265,490 1285,470 1297,450 1312,407 1322,408 1335,437 1348,445 1362,463 1385,465 1402,443 1422,463');
s2 += trace('131,650 138,640 146,620 152,655 165,640 170,620 180,635 193,625 205,665 210,688 218,645 228,620 238,640 246,590 255,530 262,497 272,540 280,570 292,605 300,625 307,668 317,585 325,605 350,595 355,605 362,592 372,625 380,660 392,670 402,718 415,690 425,725 435,735 445,727 452,738 465,705 474,685 490,705 505,735 525,750 535,730 544,748 560,705 575,703 590,720 603,728 617,762 632,730 642,745 660,737 672,798 683,780 697,700 708,595 718,620 728,650 735,690 745,720 755,735 778,737 788,790 805,785 818,822 828,785 848,815 862,775 875,755 893,700 905,720 918,762 930,695 945,655 955,635 963,655 972,660 982,610 995,580 1005,545 1015,540 1028,475 1040,500 1055,545 1065,580 1085,597 1100,582 1115,580 1124,632 1140,595 1165,558 1175,580 1220,570 1247,620 1257,615 1275,580 1290,560 1312,520 1330,530 1357,550 1385,543 1405,525 1422,525');
$('chart2').innerHTML = s2;
```
